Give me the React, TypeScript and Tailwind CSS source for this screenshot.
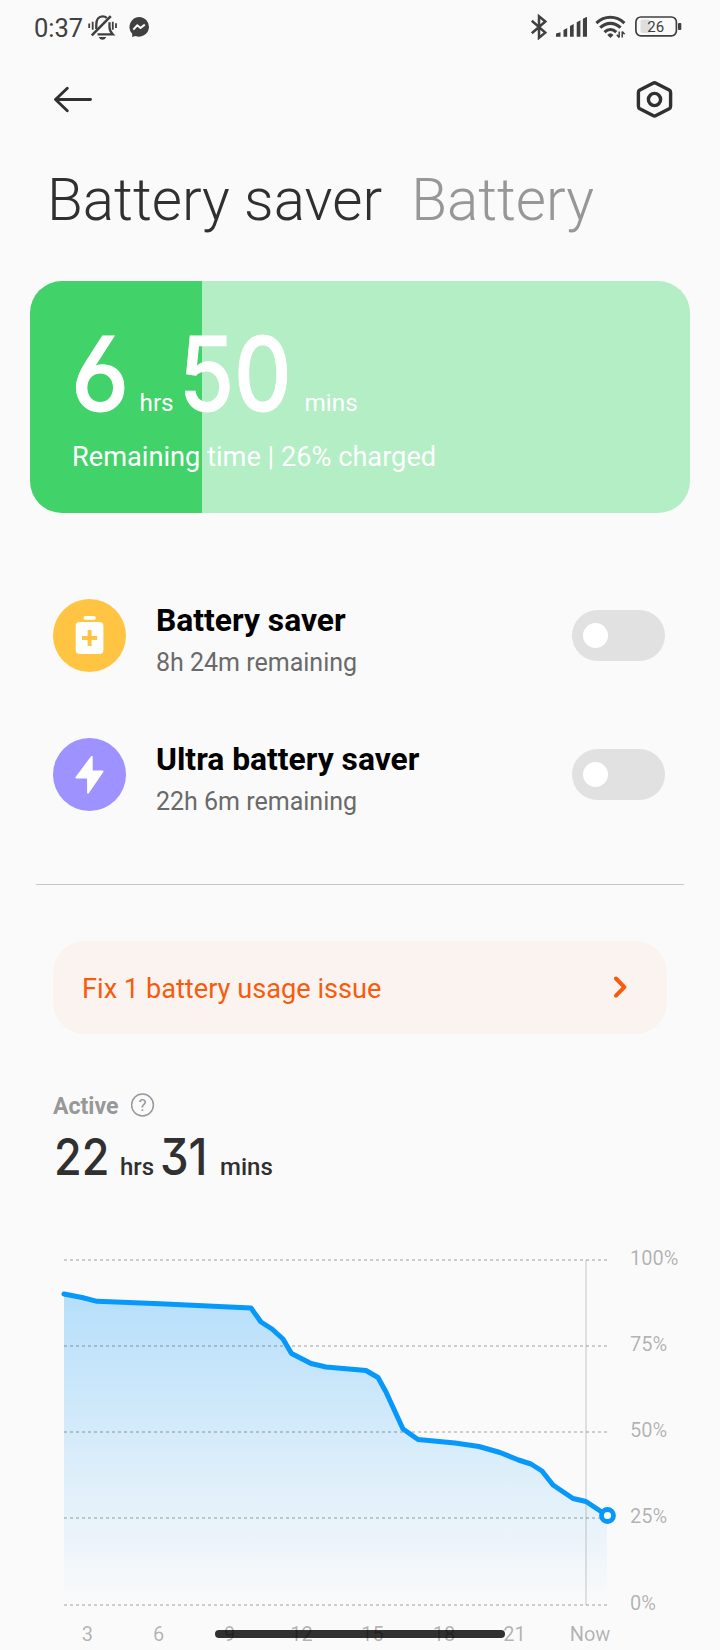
import type { ReactNode } from 'react';

const levels: [number, number][] = [
  [64, 1294], [82, 1297.5], [97, 1301.3], [160, 1303.7], [251, 1308], [261, 1322],
  [272, 1329], [283, 1339], [291.5, 1353.5], [311, 1363.5], [326, 1367], [366, 1370.5],
  [378, 1377.5], [386, 1392], [403, 1429], [418, 1439.5], [455, 1443], [479, 1446.5],
  [500, 1452.5], [518.5, 1460], [531, 1464], [542, 1471], [553, 1485], [573, 1498.5],
  [586, 1501.5], [607, 1515.5],
];

const gridLines = [
  { y: 1260, label: '100%' },
  { y: 1346, label: '75%' },
  { y: 1432, label: '50%' },
  { y: 1518, label: '25%' },
  { y: 1605, label: '0%' },
];

const hours = [
  { x: 87.3, label: '3' },
  { x: 158.7, label: '6' },
  { x: 229.7, label: '9' },
  { x: 301.5, label: '12' },
  { x: 372.5, label: '15' },
  { x: 444, label: '18' },
  { x: 514.5, label: '21' },
  { x: 590, label: 'Now' },
];

function StatusBar() {
  return (
    <div className="flex h-[53px] items-center pl-[34px] pr-[38px] text-[#404040]">
      <span className="mt-[3px] w-[54px] text-[25.5px] leading-7">0:37</span>
      {/* muted bell */}
      <svg className="h-[26px] w-[29px]" viewBox="88 13.5 29 26" fill="none" stroke="currentColor" strokeWidth="2.3">
        <path d="M96.3 28.5V24c0-5 2.6-8.2 6.2-8.2 1.8 0 3.3.6 4.4 1.7" />
        <path d="M97.5 33.8h15.2c-2-2-3.2-4.3-3.2-7v-5" />
        <path d="M91.8 34.8l19-19.2" strokeWidth="2.6" />
        <path d="M89.2 23v4.5M92.7 21.2v8M112.8 21.2v8M116 22.8v4.6" strokeWidth="1.8" />
        <path d="M98.8 36.6h7.4c-.6 1.6-1.8 2.6-3.7 2.6s-3.1-1-3.7-2.6z" fill="currentColor" stroke="none" />
      </svg>
      <svg className="ml-3 h-5 w-5" viewBox="0 0 20 20">
        <path d="M10 0a10 9.8 0 1 1-3.5 19L3.2 20V16.8A10 10 0 0 1 10 0z" fill="currentColor" />
        <path d="M4.3 12.6l4-4.3 3.2 2.7 4.3-3.4" fill="none" stroke="#fafafa" strokeWidth="2" strokeLinejoin="round" />
      </svg>
      <svg className="ml-auto h-[26px] w-[17px]" viewBox="530 13.5 17 26" fill="none" stroke="currentColor" strokeWidth="2.5">
        <path d="M531.8 20.3l13.5 11.8-6.3 5.2V15.8l6.3 5.2-13.5 11.8" />
      </svg>
      <svg className="ml-2 h-5 w-8" viewBox="555 17 32 20" fill="currentColor">
        <path d="M556 33.6l4.5-1.4v4.5H556zM563.5 30l3.7-2v8.7h-3.7zM570 26l3.7-2v12.7H570zM576.7 22.3l3.7-2v16.4h-3.7zM582.9 18.8l4.1-2v19.9h-4.1z" />
      </svg>
      <svg className="ml-2 h-6 w-[31px]" viewBox="595 15.5 31 24" fill="none" stroke="currentColor" strokeWidth="3.1">
        <path d="M596.4 23.7c8.2-7.9 19.8-7.9 28 0" />
        <path d="M600.2 28.2c6.2-5.8 14.2-5.8 20.4 0" />
        <path d="M604.5 32.6c3.6-3.4 8.2-3.4 11.8 0" />
        <path d="M607.3 35.4q3.1-3.3 6.2 0l-3.1 3.2z" fill="currentColor" stroke="none" />
        <path d="M619.2 32v6M622.2 32v6M616.8 35.2l2.4 2.8M622.2 32l2.4 2.8" strokeWidth="1.5" />
      </svg>
      <svg className="ml-2 h-[21px] w-12" viewBox="634 16 48 21">
        <rect x="640.5" y="19.5" width="10" height="13.5" rx="2" fill="#dedede" />
        <rect x="635.9" y="17" width="40.5" height="18.8" rx="5" fill="none" stroke="currentColor" strokeWidth="1.7" />
        <rect x="678" y="23" width="3.3" height="7" rx="1" fill="currentColor" />
        <text x="647.3" y="31.8" fontSize="15" fill="currentColor">26</text>
      </svg>
    </div>
  );
}

function Toolbar() {
  return (
    <div className="flex h-[93px] items-center justify-between pl-[53px] pr-[46px] text-[#303030]">
      <svg className="h-7 w-10" viewBox="53 86 40 28" fill="none" stroke="currentColor" strokeWidth="2.9" strokeLinecap="round" strokeLinejoin="round">
        <path d="M90.5 99.5H55.5M67.3 88.2L55.5 99.5l11.8 11.3" />
      </svg>
      <svg className="h-[38px] w-[38px]" viewBox="636 81 38 38" fill="none" stroke="currentColor" strokeWidth="3.4" strokeLinejoin="round">
        <path d="M653 83.2q1.5-.8 3 0l13.2 6.9q1.4.8 1.4 2.4v13.8q0 1.6-1.4 2.4L656 115.6q-1.5.8-3 0l-13.2-6.9q-1.4-.8-1.4-2.4V92.5q0-1.6 1.4-2.4z" />
        <circle cx="654.5" cy="99.5" r="6.1" />
      </svg>
    </div>
  );
}

function ModeRow({ icon, title, detail }: { icon: ReactNode; title: string; detail: string }) {
  return (
    <div className="flex h-[139px] items-center pl-[53px] pr-[55px]">
      {icon}
      <div className="ml-[30px] flex-1 pt-3">
        <h2 className="text-[31.8px] font-bold leading-[42px] text-black">{title}</h2>
        <p className="text-[25px] leading-[43px] text-[#6a6a6a]">{detail}</p>
      </div>
      <button className="flex h-[51px] w-[93px] items-center rounded-full bg-[#e1e1e1] pl-[10.5px]">
        <span className="-mt-px h-[25px] w-[25px] rounded-full bg-white" />
      </button>
    </div>
  );
}

function UsageChart() {
  const line = levels.map(([x, y]) => `${x},${y}`).join(' ');
  return (
    <svg className="relative z-10 block h-[468px] w-[720px]" viewBox="0 1182 720 468" fontSize="20">
      <defs>
        <linearGradient id="usage" x1="0" y1="0" x2="0" y2="1">
          <stop offset="0" stopColor="#0798fb" stopOpacity="0.28" />
          <stop offset="1" stopColor="#0798fb" stopOpacity="0" />
        </linearGradient>
      </defs>
      <polygon points={`64,1605 ${line} 607,1605`} fill="url(#usage)" />
      {gridLines.map(({ y, label }) => (
        <g key={label}>
          <path d={`M64 ${y}H607.5`} stroke="#000" strokeOpacity="0.18" strokeWidth="2" strokeDasharray="3 3" />
          <text x="630" y={y + 5} fill="#000" fillOpacity="0.3">{label}</text>
        </g>
      ))}
      <path d="M586 1260v345" stroke="#000" strokeOpacity="0.13" strokeWidth="1.6" />
      <polyline points={line} fill="none" stroke="#0798fb" strokeWidth="5" strokeLinecap="round" strokeLinejoin="round" />
      <circle cx="607.5" cy="1515.5" r="6" fill="#fff" stroke="#0798fb" strokeWidth="4.8" />
      {hours.map(({ x, label }) => (
        <text key={label} x={x} y="1641" textAnchor="middle" fill="#000" fillOpacity="0.3">{label}</text>
      ))}
    </svg>
  );
}

export default function App() {
  return (
    <div className="relative h-[1650px] w-[720px] overflow-hidden bg-[#fafafa] font-['Roboto',sans-serif]">
      <StatusBar />
      <Toolbar />

      <div className="mt-5 flex gap-[29px] whitespace-nowrap pl-[47px] text-[58.4px] font-light leading-[68px]">
        <h1 className="text-[#303030]">Battery saver</h1>
        <span className="text-[#979797]">Battery</span>
      </div>

      <section className="mx-[30px] mt-[47px] h-[232px] rounded-[32px] bg-linear-to-r from-[#41d369] from-26% to-[#b3eec5] to-26% pl-[42px] pt-[42px] text-white">
        <div className="flex h-[103px] items-baseline whitespace-nowrap text-[24.3px] leading-[103px]">
          <span className="w-[67.5px]">
            <span className="-ml-[1.5px] inline-block origin-left scale-x-[0.96] font-['Inter'] text-[102.5px] font-medium [-webkit-text-stroke:1px_white] [font-feature-settings:'cv03']">6</span>
          </span>
          <span className="w-[39.5px]">hrs</span>
          <span className="w-[125.5px]">
            <span className="inline-block origin-left scale-x-[0.87] font-['Inter'] text-[102.5px] font-medium [-webkit-text-stroke:1px_white]">50</span>
          </span>
          <span>mins</span>
        </div>
        <p className="mt-[15px] text-[27.2px] leading-8">Remaining time | 26% charged</p>
      </section>

      <div className="mt-[53px]">
        <ModeRow
          title="Battery saver"
          detail="8h 24m remaining"
          icon={
            <svg className="h-[73px] w-[73px]" viewBox="0 0 73 73">
              <circle cx="36.5" cy="36.5" r="36.5" fill="#ffc542" />
              <rect x="30.5" y="17" width="12.3" height="3.8" rx="1.9" fill="#fff" />
              <rect x="22.7" y="23" width="27.7" height="32" rx="4" fill="#fff" />
              <path d="M36.6 31v16M29 39h15.2" stroke="#ffc542" strokeWidth="4" />
            </svg>
          }
        />
        <ModeRow
          title="Ultra battery saver"
          detail="22h 6m remaining"
          icon={
            <svg className="h-[73px] w-[73px]" viewBox="0 0 73 73">
              <circle cx="36.5" cy="36.5" r="36.5" fill="#9d92ff" />
              <path d="M38.8 18.7V33.5H49.6L35 54.8V39.5H23.3z" fill="#fff" stroke="#fff" strokeWidth="1.8" strokeLinejoin="round" />
            </svg>
          }
        />
      </div>

      <hr className="mx-9 mt-10 border-[#c6c6c6]" />

      <div className="mx-[53px] mt-14 flex h-[93px] items-center justify-between rounded-[32px] bg-[#fbf3f0] pl-[29px] pr-10 text-[#f95b0d]">
        <span className="pt-1 text-[27.2px]">Fix 1 battery usage issue</span>
        <svg className="h-6 w-[14px]" viewBox="0 0 14 24" fill="none" stroke="currentColor" strokeWidth="4" strokeLinecap="round" strokeLinejoin="round">
          <path d="M3 2.5L11.4 11.1 3 19.6" />
        </svg>
      </div>

      <div className="mt-14 flex h-8 items-center pl-[53px] text-[#989898]">
        <span className="pt-px text-[23.1px] font-bold leading-8">Active</span>
        <svg className="-mt-[3px] ml-3 h-6 w-6" viewBox="0.5 0 24 24">
          <circle cx="12" cy="12" r="10.9" fill="none" stroke="currentColor" strokeWidth="1.5" />
          <text x="12" y="18" textAnchor="middle" fontSize="17" fill="currentColor">?</text>
        </svg>
      </div>
      <div className="mt-[10px] flex h-[50px] items-baseline whitespace-nowrap pl-[54px] text-2xl font-medium leading-[50px] text-[#303030]">
        <span className="w-[66px]">
          <span className="inline-block origin-left scale-x-[0.89] font-['Inter'] text-[50.5px]">22</span>
        </span>
        <span className="w-10">hrs</span>
        <span className="w-[60px]">
          <span className="inline-block origin-left scale-x-[0.9] font-['Inter'] text-[50.5px] [font-feature-settings:'cv09']">31</span>
        </span>
        <span>mins</span>
      </div>

      <UsageChart />
      <div className="absolute bottom-3 left-[215px] h-2 w-[290px] rounded-full bg-[#303030]" />
    </div>
  );
}
